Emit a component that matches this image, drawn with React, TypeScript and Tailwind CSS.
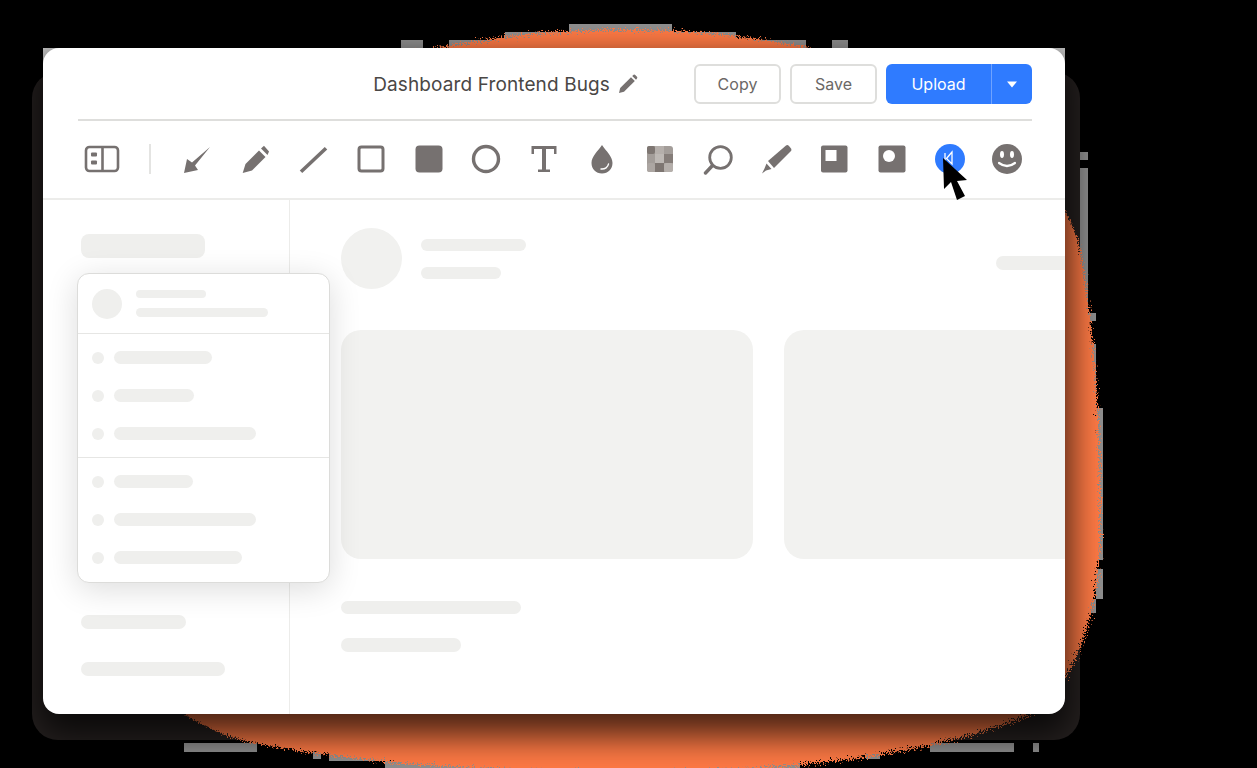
import React from 'react';

const ic = '#767170';

const Bar = ({ className }: { className: string }) => <div className={`rounded-full bg-[#efefed] ${className}`} />;

// grey blocks that sit round the edge of the glow
const slivers = [
  [569, 24, 103, 8], [505, 32, 231, 8], [401, 40, 22, 8], [449, 40, 357, 8], [832, 40, 16, 8],
  [184, 743, 73, 9], [930, 743, 84, 9], [313, 752, 8, 7], [329, 752, 56, 9], [866, 752, 14, 7], [1033, 743, 6, 9],
  [385, 761, 415, 7], [1080, 152, 8, 8], [1080, 168, 8, 145], [1087, 313, 9, 8], [1087, 344, 9, 64],
  [1096, 408, 7, 152], [1096, 569, 7, 30], [1087, 599, 9, 14],
];

const Glow = () => (
  <svg className="absolute inset-0" width="1257" height="768" viewBox="0 0 1257 768">
    <defs>
      <filter id="speckle" x="-5%" y="-5%" width="110%" height="110%">
        <feTurbulence type="fractalNoise" baseFrequency="0.7" numOctaves="2" seed="4" />
        <feDisplacementMap in="SourceGraphic" scale="14" />
      </filter>
    </defs>
    {slivers.map(([x, y, w, h]) => (
      <rect key={`${x}-${y}`} x={x} y={y} width={w} height={h} fill="#8f8f8f" />
    ))}
    <rect x="32" y="72" width="1048" height="668" rx="26" fill="#262120" />
    <rect x="43" y="48" width="1022" height="20" fill="#c9c9c9" />
    <path
      d="M630 30 C700 30 760 38 810 48 C900 68 1040 130 1078 240 C1090 300 1102 400 1100 540 C1098 610 1080 670 1040 710 C950 750 820 772 630 772 C470 772 330 760 240 740 C120 700 60 600 60 400 C60 200 250 80 450 46 C510 34 570 30 630 30 Z"
      fill="#ff7a45"
      filter="url(#speckle)"
    />
  </svg>
);

const Tool = ({ children }: { children: React.ReactNode }) => (
  <div className="flex w-[57.9px] shrink-0 items-center justify-center">
    <svg width="32" height="32" viewBox="0 0 32 32" fill={ic}>{children}</svg>
  </div>
);

const Row = ({ w }: { w: string }) => (
  <div className="flex items-center gap-[10px]">
    <div className="h-[12px] w-[12px] rounded-full bg-[#efefed]" />
    <Bar className={`h-[13px] ${w}`} />
  </div>
);

export default function App() {
  return (
    <div className="relative h-[768px] overflow-hidden bg-black pl-[43px] pt-[48px] font-['Inter',sans-serif]">
      <Glow />
      <div className="relative flex h-[666px] w-[1022px] flex-col overflow-hidden rounded-[16px] bg-white shadow-[0_16px_34px_6px_rgba(0,0,0,0.72)]">
        {/* top bar */}
        <div className="ml-[35px] mr-[33px] flex h-[73px] shrink-0 items-start justify-end border-b-2 border-[#dededc] pt-[16px]">
          <div className="mr-[56px] flex h-[40px] items-center gap-[8px] text-[19px] tracking-[0.12px] text-[#4a4745]">
            <span className="pt-[2px]">Dashboard Frontend Bugs</span>
            <svg width="20" height="20" viewBox="0 0 20 20" fill={ic}>
              <path d="M1 19 L2.2 14 L13 3.2 L16.8 7 L6 17.8 Z" />
              <path d="M14.2 2 L15.6 0.8 Q16.4 0.2 17.2 0.9 L19 2.8 Q19.7 3.6 19 4.4 L18 5.8 Z" />
            </svg>
          </div>
          <div className="flex gap-[9px]">
            <button className="h-[40px] w-[87px] rounded-[6px] border-2 border-[#dededc] bg-white text-[16px] text-[#6b6866]">Copy</button>
            <button className="h-[40px] w-[87px] rounded-[6px] border-2 border-[#dededc] bg-white text-[16px] text-[#6b6866]">Save</button>
            <div className="flex h-[40px] w-[146px] rounded-[6px] bg-[#2f7bff] text-white">
              <button className="w-[106px] border-r border-[#6fa3ff] text-[16px]">Upload</button>
              <button className="flex flex-1 items-center justify-center">
                <svg width="12" height="7" viewBox="0 0 12 7" fill="#fff"><path d="M1 0.5 H11 L6 6.5 Z" /></svg>
              </button>
            </div>
          </div>
        </div>

        {/* toolbar */}
        <div className="flex h-[79px] shrink-0 items-center border-b-2 border-[#ececea] pb-[2px] pl-[30px]">
          <div className="flex w-[58px] shrink-0 items-center justify-center">
            <svg width="36" height="28" viewBox="0 0 36 28" fill="none" stroke={ic} strokeWidth="2.6">
              <rect x="2" y="2" width="32" height="24" rx="3.5" />
              <path d="M18.5 2 V26" />
              <rect x="7" y="7.5" width="6" height="4" rx="1" fill={ic} stroke="none" />
              <rect x="7" y="15.5" width="6" height="4" rx="1" fill={ic} stroke="none" />
            </svg>
          </div>
          <div className="ml-[18px] mr-[17px] h-[30px] w-[2px] bg-[#e4e4e2]" />
          <Tool><path d="M3 30 L6 16 L11 19.5 L29 4 L14 22.5 L17 27 Z" /></Tool>
          <Tool>
            <path d="M3.7 30 L6.5 21 L20 7.5 L26.5 14 L13 27.5 Z" />
            <path d="M22 5.5 L25 2.8 L30 8.5 L28.5 12 Z" />
          </Tool>
          <Tool><path d="M4 28.7 L29 5.3" fill="none" stroke={ic} strokeWidth="3.6" /></Tool>
          <Tool><rect x="4" y="4" width="24" height="24" rx="2.5" fill="none" stroke={ic} strokeWidth="3" /></Tool>
          <Tool><rect x="2.5" y="2.5" width="27" height="27" rx="4" /></Tool>
          <Tool><circle cx="16" cy="16" r="12.5" fill="none" stroke={ic} strokeWidth="3.4" /></Tool>
          <Tool>
            <path d="M3.5 3 H28.5 V11 H26 V6 H18 V26.5 H22 V29 H10 V26.5 H14 V6 H6 V11 H3.5 Z" />
          </Tool>
          <Tool>
            <path d="M16 2 C20 8 26.5 13.5 26.5 20 C26.5 26 22 30.5 16 30.5 C10 30.5 5.5 26 5.5 20 C5.5 13.5 12 8 16 2 Z" />
            <path d="M15 26 C19 26.5 22 24 22.5 21" fill="none" stroke="#fff" strokeWidth="1.4" strokeLinecap="round" />
          </Tool>
          <Tool>
            <rect x="3" y="3" width="26" height="26" rx="3" fill="#a39d99" />
            <rect x="3" y="3" width="8" height="8" rx="2" fill="#7e7672" />
            <rect x="11" y="3" width="9" height="8" fill="#b5afab" />
            <rect x="20" y="11" width="9" height="9" fill="#857d79" />
            <rect x="11" y="11" width="9" height="9" fill="#bdb8b4" />
            <rect x="3" y="20" width="8" height="9" rx="2" fill="#aca6a2" />
            <rect x="11" y="20" width="9" height="9" fill="#7e7672" />
            <rect x="20" y="20" width="9" height="9" rx="2" fill="#b5afab" />
          </Tool>
          <Tool>
            <circle cx="18.5" cy="14.5" r="10.8" fill="none" stroke={ic} strokeWidth="2.8" />
            <path d="M3.5 30 L10.5 22.5" fill="none" stroke={ic} strokeWidth="3.4" strokeLinecap="round" />
          </Tool>
          <Tool>
            <path d="M26 2.5 Q27.5 1.5 29 3 L31 5.5 Q32 7 31 8 L14 25 L8 18 Z" />
            <path d="M6.5 20.5 L11.5 26 L6 27.5 L2 30.5 L4.5 25.5 Z" />
          </Tool>
          <Tool>
            <rect x="3" y="2.5" width="26.5" height="27" rx="2" />
            <rect x="7.5" y="7" width="11" height="11" fill="#fff" />
          </Tool>
          <Tool>
            <rect x="2.5" y="2.5" width="27" height="27" rx="2" />
            <circle cx="13" cy="13" r="6" fill="#fff" />
          </Tool>
          <Tool>
            <circle cx="16" cy="16" r="15" fill="#2f7bff" />
            <path d="M11 10 V21 M18 9 L12.5 15.5 L18 21 Z" fill="none" stroke="#fff" strokeWidth="1.3" />
          </Tool>
          <Tool>
            <circle cx="16" cy="16" r="15" />
            <ellipse cx="11" cy="11.5" rx="2" ry="3.4" fill="#fff" />
            <ellipse cx="21" cy="11.5" rx="2" ry="3.4" fill="#fff" />
            <path d="M8 20 Q16 26 24 20" fill="none" stroke="#fff" strokeWidth="2.2" strokeLinecap="round" />
          </Tool>
        </div>

        {/* body */}
        <div className="relative flex min-h-0 flex-1">
          <div className="w-[247px] shrink-0 border-r border-[#ececea] pl-[38px] pt-[34px]">
            <div className="h-[24px] w-[124px] rounded-[8px] bg-[#efefed]" />
            <Bar className="mt-[357px] h-[14px] w-[105px]" />
            <Bar className="mt-[33px] h-[14px] w-[144px]" />
          </div>

          <div className="min-w-0 flex-1 overflow-hidden pl-[51px] pt-[28px]">
            <div className="flex items-center">
              <div className="h-[61px] w-[61px] shrink-0 rounded-full bg-[#f1f1ef]" />
              <div className="ml-[19px] flex flex-col gap-[16px]">
                <Bar className="h-[12px] w-[105px]" />
                <Bar className="h-[12px] w-[80px]" />
              </div>
              <Bar className="ml-auto mt-[8px] h-[14px] w-[69px] rounded-r-none" />
            </div>
            <div className="mt-[41px] flex gap-[31px]">
              <div className="h-[229px] w-[412px] shrink-0 rounded-[20px] bg-[#f2f2f0]" />
              <div className="h-[229px] w-[412px] shrink-0 rounded-[20px] bg-[#f2f2f0]" />
            </div>
            <Bar className="mt-[42px] h-[13px] w-[180px]" />
            <Bar className="mt-[24px] h-[14px] w-[120px]" />
          </div>

          {/* popover */}
          <div className="absolute left-[34px] top-[73px] w-[253px] rounded-[12px] border border-[#dcdcda] bg-white shadow-[0_6px_32px_rgba(0,0,0,0.14)]">
            <div className="flex h-[60px] items-center gap-[14px] border-b border-[#e6e6e4] pl-[14px]">
              <div className="h-[30px] w-[30px] rounded-full bg-[#efefed]" />
              <div className="flex flex-col gap-[10px]">
                <Bar className="h-[8px] w-[70px]" />
                <Bar className="h-[9px] w-[132px]" />
              </div>
            </div>
            <div className="flex flex-col gap-[25px] border-b border-[#e6e6e4] py-[17px] pl-[14px]">
              <Row w="w-[98px]" />
              <Row w="w-[80px]" />
              <Row w="w-[142px]" />
            </div>
            <div className="flex flex-col gap-[25px] pb-[18px] pl-[14px] pt-[17px]">
              <Row w="w-[79px]" />
              <Row w="w-[142px]" />
              <Row w="w-[128px]" />
            </div>
          </div>
        </div>

        {/* cursor */}
        <svg className="absolute left-[897px] top-[108px]" width="30" height="46" viewBox="0 0 30 46" fill="#000">
          <path d="M3 2 L4 33 L11 26 L17 44 L25 40 L17 25 L27 24 Z" />
        </svg>
      </div>
    </div>
  );
}
